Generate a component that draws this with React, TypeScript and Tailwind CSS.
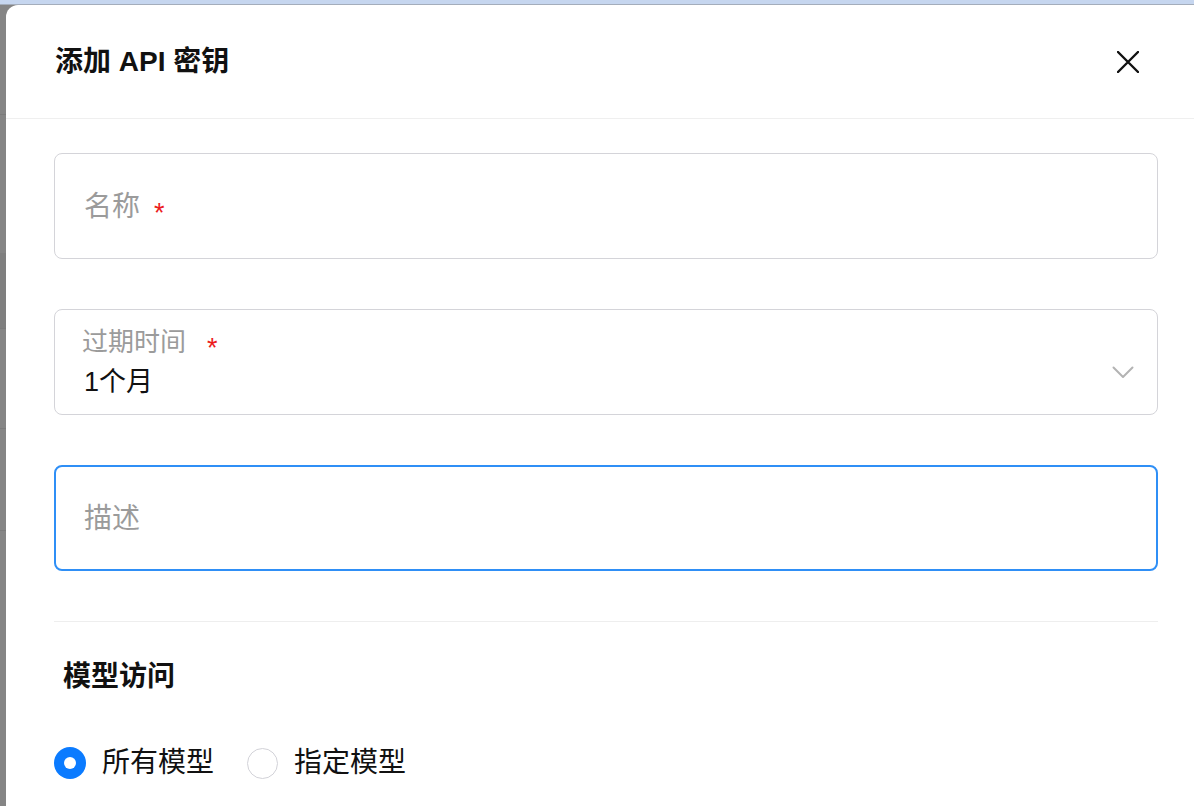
import React from "react";

const font = { fontFamily: '"Liberation Sans", "Noto Sans CJK SC", sans-serif' };

function Asterisk({ gap = "ml-[14px]" }: { gap?: string }) {
  return (
    <span className={`${gap} text-[27px] leading-none text-[#ec1c1c] translate-y-[6px]`}>*</span>
  );
}

export default function App() {
  return (
    <div className="h-screen w-full overflow-hidden bg-[#858585] flex flex-col" style={font}>
      {/* top strip behind the backdrop */}
      <div className="h-[4px] w-full bg-[#c6d6ef] shrink-0" />
      <div className="h-px w-full bg-[#a4adbb] shrink-0" />

      <div className="flex flex-1 min-h-0">
        {/* backdrop column on the left */}
        <div className="w-[6px] shrink-0 flex flex-col">
          <div className="h-[109px]" />
          <div className="h-px bg-[#7b7b7b]" />
          <div className="h-[138px]" />
          <div className="h-[75px] bg-[#7f7f7f]" />
          <div className="h-px bg-[#7b7b7b]" />
          <div className="h-[99px]" />
          <div className="h-px bg-[#7b7b7b]" />
          <div className="h-[101px]" />
          <div className="h-px bg-[#7b7b7b]" />
        </div>

        {/* modal */}
        <div className="w-[1200px] shrink-0 bg-white rounded-t-[12px]">
          <div className="h-[114px] border-b border-[#efefef] flex items-center justify-between pl-[49px] pr-[67px]">
            <h2 className="text-[28px] font-bold text-[#111] leading-none">添加 API 密钥</h2>
            <button className="w-[22px] h-[22px] flex items-center justify-center" aria-label="关闭">
              <svg width="22" height="22" viewBox="0 0 22 22" fill="none">
                <path d="M1 1L21 21M21 1L1 21" stroke="#111" strokeWidth="2.4" strokeLinecap="round" />
              </svg>
            </button>
          </div>

          <div className="px-[48px] pt-[34px]">
            {/* 名称 */}
            <div className="h-[106px] rounded-[8px] border-[1.5px] border-[#d4d4d9] flex items-center pl-[29px] pt-[2px]">
              <span className="text-[28px] text-[#9b9b9b] leading-[40px]">名称</span>
              <Asterisk />
            </div>

            {/* 过期时间 */}
            <div className="mt-[50px] h-[106px] rounded-[8px] border-[1.5px] border-[#d4d4d9] flex pl-[27px] pr-[23px]">
              <div className="flex-1 flex flex-col pt-[15px]">
                <div className="flex items-center leading-[34px]">
                  <span className="text-[26px] text-[#9b9b9b]">过期时间</span>
                  <Asterisk gap="ml-[21px]" />
                </div>
                <span className="mt-[5px] text-[27px] leading-[36px] text-[#111] pl-[2px]">1个月</span>
              </div>
              <div className="flex items-center pt-[20px]">
                <svg width="22" height="13" viewBox="0 0 22 13" fill="none">
                  <path d="M1.5 1.5L11 11L20.5 1.5" stroke="#b3b3b3" strokeWidth="2" strokeLinecap="round" strokeLinejoin="round" />
                </svg>
              </div>
            </div>

            {/* 描述 */}
            <div className="mt-[50px] h-[106px] rounded-[8px] border-2 border-[#2f8ff6] flex items-center pl-[28px] pt-[2px]">
              <span className="text-[28px] text-[#9b9b9b] leading-[40px]">描述</span>
            </div>

            <div className="mt-[50px] h-px bg-[#eeeeee]" />

            <div className="mt-[35px] pl-[9px] text-[28px] font-bold text-[#111] leading-[40px]">模型访问</div>

            <div className="mt-[46px] flex items-center">
              <div className="w-[32px] h-[32px] rounded-full bg-[#0b7bff] flex items-center justify-center">
                <div className="w-[12px] h-[12px] rounded-full bg-white" />
              </div>
              <span className="ml-[16px] text-[28px] leading-[40px] text-[#111]">所有模型</span>
              <div className="ml-[33px] w-[31px] h-[31px] rounded-full border-[1.5px] border-[#d2d2d8]" />
              <span className="ml-[16px] text-[28px] leading-[40px] text-[#111]">指定模型</span>
            </div>
          </div>
        </div>
      </div>
    </div>
  );
}
